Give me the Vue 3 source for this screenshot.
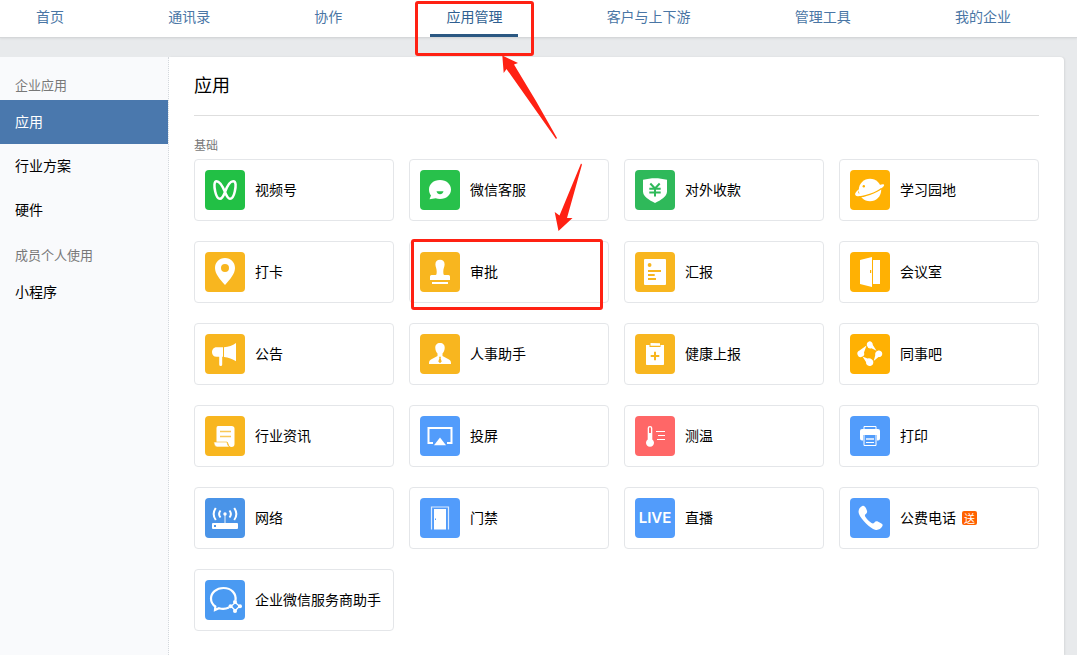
<script setup>
const navItems = [
  { label: '首页' },
  { label: '通讯录' },
  { label: '协作' },
  { label: '应用管理', active: true },
  { label: '客户与上下游' },
  { label: '管理工具' },
  { label: '我的企业' },
]

const sideGroups = [
  {
    title: '企业应用',
    items: [{ label: '应用', active: true }, { label: '行业方案' }, { label: '硬件' }],
  },
  { title: '成员个人使用', items: [{ label: '小程序' }] },
]

const apps = [
  { name: '视频号', icon: 'channels', tone: 'green' },
  { name: '微信客服', icon: 'service', tone: 'mint' },
  { name: '对外收款', icon: 'payment', tone: 'jade' },
  { name: '学习园地', icon: 'planet', tone: 'orange' },
  { name: '打卡', icon: 'pin', tone: 'yellow' },
  { name: '审批', icon: 'stamp', tone: 'yellow' },
  { name: '汇报', icon: 'report', tone: 'yellow' },
  { name: '会议室', icon: 'room', tone: 'orange' },
  { name: '公告', icon: 'megaphone', tone: 'yellow' },
  { name: '人事助手', icon: 'person', tone: 'yellow' },
  { name: '健康上报', icon: 'health', tone: 'yellow' },
  { name: '同事吧', icon: 'circle', tone: 'orange' },
  { name: '行业资讯', icon: 'scroll', tone: 'yellow' },
  { name: '投屏', icon: 'cast', tone: 'blue' },
  { name: '测温', icon: 'thermo', tone: 'red' },
  { name: '打印', icon: 'printer', tone: 'blue' },
  { name: '网络', icon: 'router', tone: 'deep' },
  { name: '门禁', icon: 'door', tone: 'blue' },
  { name: '直播', icon: 'live', tone: 'blue' },
  { name: '公费电话', icon: 'phone', tone: 'blue', badge: '送' },
  { name: '企业微信服务商助手', icon: 'assistant', tone: 'azure' },
]
</script>

<template>
  <div class="page">
    <header class="top">
      <nav class="nav">
        <a
          v-for="item in navItems"
          :key="item.label"
          href="#"
          class="nav-item"
          :class="{ active: item.active }"
        >{{ item.label }}</a>
      </nav>
    </header>

    <div class="body">
      <aside class="side">
        <section v-for="group in sideGroups" :key="group.title" class="side-group">
          <h2 class="side-title">{{ group.title }}</h2>
          <a
            v-for="item in group.items"
            :key="item.label"
            href="#"
            class="side-item"
            :class="{ active: item.active }"
          >{{ item.label }}</a>
        </section>
      </aside>

      <main class="main">
        <h1 class="title">应用</h1>
        <h2 class="subtitle">基础</h2>
        <div class="grid">
          <a v-for="app in apps" :key="app.name" href="#" class="card">
            <span class="icon" :class="app.tone">
              <span v-if="app.icon === 'live'" class="live">LIVE</span>
              <svg v-else viewBox="0 0 40 40" fill="#fff" aria-hidden="true">
                <path
                  v-if="app.icon === 'channels'"
                  d="M20 22C17.500 16 14.400 11.200 11.600 11.200C9 11.200 9 16 10.200 21.500C11.300 26.500 12.800 28.800 15 28.800C17 28.800 18.500 26 20 22C22 16.500 25.200 11.200 28.200 11.200C31.200 11.200 31 16 29.800 21.500C28.700 26.500 27.200 28.800 25 28.800C23 28.800 21.600 26 20 22Z"
                  fill="none"
                  stroke="#fff"
                  stroke-width="2.500"
                />
                <g v-else-if="app.icon === 'service'">
                  <path d="M20 10C26.500 10 31 14.200 31 19.500C31 24.800 26.500 29 20 29C18.500 29 17 28.800 15.700 28.300L9.500 29.300L11 25.500C9.700 23.800 9 21.800 9 19.500C9 14.200 13.500 10 20 10Z" />
                  <path d="M16.500 21.300H23.500C23 23.300 21.700 24.200 20 24.200S17 23.300 16.500 21.300Z" fill="#28c14b" />
                </g>
                <g v-else-if="app.icon === 'payment'">
                  <path d="M8 9.800C12 8.700 16 8.200 20 8.200S28 8.700 32 9.800V21.500C32 26.500 26 30 20 33C14 30 8 26.500 8 21.500Z" />
                  <path d="M15.300 13.500L20 18.500L24.700 13.500M14.300 18.700H25.700M14.300 22.500H25.700M20 18.500V26.500" fill="none" stroke="#2fb95a" stroke-width="2" />
                </g>
                <g v-else-if="app.icon === 'planet'">
                  <circle cx="20" cy="20" r="11.200" />
                  <path d="M10 18.500C6.500 20.800 4.600 23.200 5.200 24.700C6.300 27.500 14 26.300 22.300 23C30 20 35 16.500 34 14.800C33.600 14.100 31.900 14.200 29.600 15C31.500 16.500 27 19.500 20.800 21.700C14 24.200 8.500 24.500 8.300 22.800C8.200 21.800 9 20 10 18.500Z" />
                  <path d="M8.800 26.800C13.500 26.800 26 23 31.500 18.500" fill="none" stroke="#ffb103" stroke-width="1.300" />
                  <circle cx="13.800" cy="16.300" r="1.200" fill="#ffb103" />
                </g>
                <path
                  v-else-if="app.icon === 'pin'"
                  fill-rule="evenodd"
                  d="M20 6C26 6 30 10.500 30 16C30 21.500 25.500 27 20 33C14.500 27 10 21.500 10 16C10 10.500 14 6 20 6ZM20 12A4 4 0 1 0 20 20A4 4 0 1 0 20 12Z"
                />
                <path
                  v-else-if="app.icon === 'stamp'"
                  d="M20 7.800C23 7.800 24.700 9.800 24.600 12.500C24.500 15 23.300 16.500 23.300 19.500C23.300 22 23.500 23 24.500 23H28.500Q30 23 30 24.500V28H10V24.500Q10 23 11.500 23H15.500C16.500 23 16.700 22 16.700 19.500C16.700 16.500 15.500 15 15.400 12.500C15.300 9.800 17 7.800 20 7.800ZM12 30H28V32H12Z"
                />
                <g v-else-if="app.icon === 'report'">
                  <rect x="9" y="7" width="22" height="26" rx="1" />
                  <g fill="#f8b61f">
                    <circle cx="14.600" cy="13" r="1.900" />
                    <path d="M13 18H26V20H13ZM13 22H19.700V24H13ZM13 26H21V28H13Z" />
                  </g>
                </g>
                <g v-else-if="app.icon === 'room'">
                  <path d="M10 8L22 5V35L10 32ZM23 8H30V32H23Z" />
                  <path d="M20 18H21.200V21H20Z" fill="#ffb103" />
                </g>
                <path
                  v-else-if="app.icon === 'megaphone'"
                  d="M18 13.300V22.800H17.200V30.500Q17.200 32 15.700 32T14.200 30.500V22.800H11.500C8.800 22.800 7 20.800 7 18.200S8.800 13.300 11.500 13.300ZM19 13.200C23.500 12.800 27.500 11.500 31 9V27.200C27.500 24.700 23.500 23.400 19 22.900Z"
                />
                <g v-else-if="app.icon === 'person'">
                  <path d="M20 9C23 9 24.900 11 24.700 14C24.600 16.500 23.600 18.300 22.500 19.500V22L29 25.500C30.500 26.300 31 27.500 31 30H9C9 27.500 9.500 26.300 11 25.500L17.500 22V19.500C16.400 18.300 15.400 16.500 15.300 14C15.100 11 17 9 20 9Z" />
                  <path d="M19 22.700H21L20.600 24.300L21.700 27.500L20 29.300L18.300 27.500L19.400 24.300Z" fill="#f8b61f" />
                </g>
                <g v-else-if="app.icon === 'health'">
                  <path d="M11 11H14.500V13H25.500V11H29V30.200Q29 31 28.200 31H11.800Q11 31 11 30.200Z" />
                  <path d="M16 9L25 9.200V11.800H15.500V9.500Z" />
                  <path d="M15.700 22H24.300M20 17.700V26.300" stroke="#f8b61f" stroke-width="2" />
                </g>
                <g v-else-if="app.icon === 'circle'">
                  <path d="M19.500 7.300A3.300 3.300 0 0 1 22.800 11L26.500 16.800L21.500 14.300A3.500 3.500 0 1 1 19.500 7.300Z" />
                  <path d="M28.300 16.500A3.300 3.300 0 1 1 28.500 23L23.700 27L25.200 21.500Q24.600 17.500 28.300 16.500Z" />
                  <path d="M17.500 24.500Q19.500 23.500 22 25.500A3.700 3.700 0 1 1 16 28L12.500 22.500Z" />
                  <path d="M9.500 16.500L16.500 11.500L14 18.500A3.400 3.400 0 1 1 9.500 16.500Z" />
                </g>
                <g v-else-if="app.icon === 'scroll'">
                  <path d="M13 10H26.500Q29.500 10 29.500 12.500V28Q29.500 31 26.500 31Q24 31 23.500 28L22.500 26H11.500V12Q11.500 10 13 10Z" />
                  <path d="M15 15.500H26M15 20.500H26" stroke="#f8b61f" stroke-width="1.400" opacity=".75" />
                  <path d="M8.800 26H22Q22.300 29.500 24.500 31H12.500Q9.300 31 8.800 26Z" stroke="#f8b61f" stroke-width=".6" />
                </g>
                <g v-else-if="app.icon === 'cast'">
                  <path d="M13 27H8.500V12H31.500V27H27" fill="none" stroke="#fff" stroke-width="2" />
                  <path d="M20 21.500L26 29.300H14Z" />
                </g>
                <g v-else-if="app.icon === 'thermo'">
                  <path fill-rule="evenodd" d="M15 10Q17.300 10 17.300 12V23.500A4 4 0 1 1 12.700 23.500V12Q12.700 10 15 10ZM15 11.200Q14 11.200 14 12.500V17H16V12.500Q16 11.200 15 11.200Z" />
                  <path d="M21 15.500H30M23 19.500H30M22 23.500H30" stroke="#fff" />
                </g>
                <g v-else-if="app.icon === 'printer'">
                  <path d="M14 13V10.500H26V13" fill="none" stroke="#fff" />
                  <path d="M12 13H28Q30 13 30 15V22.500Q30 24.500 28 24.500H27V19H13V24.500H12Q10 24.500 10 22.500V15Q10 13 12 13Z" />
                  <path d="M14 19V29.500H26V19" fill="none" stroke="#fff" />
                  <path d="M16 22H24V24H16Z" opacity=".7" />
                  <path d="M16 26.500H24" stroke="#fff" />
                </g>
                <g v-else-if="app.icon === 'router'">
                  <path fill-rule="evenodd" d="M8 25H32Q33 25 33 26V30Q33 31 32 31H8Q7 31 7 30V26Q7 25 8 25ZM9 27V29H11V27Z" />
                  <circle cx="20" cy="16" r="1.700" />
                  <path d="M20 17V25" stroke="#fff" stroke-width="1.500" opacity=".6" />
                  <path d="M10.800 10Q6.500 16 10.800 22M15.500 12.500Q12.700 16 15.500 19.500M29.200 10Q33.500 16 29.200 22M24.500 12.500Q27.300 16 24.500 19.500" fill="none" stroke="#fff" stroke-width="2" />
                </g>
                <g v-else-if="app.icon === 'door'">
                  <path d="M11.500 31.500V9H28.500V31.500" fill="none" stroke="#fff" stroke-width="1.200" opacity=".8" />
                  <path fill-rule="evenodd" d="M14 11H26V31.500H14ZM15 20.500V22H16V20.500Z" />
                </g>
                <path
                  v-else-if="app.icon === 'phone'"
                  d="M12.300 8C13.700 7.400 15 8.200 16 10.300L16.800 12.200C17.500 14 17 15 15.500 16.200C14.700 17 14.700 17.800 15.500 19C17.500 21.800 19.200 23.400 21.500 25C22.700 25.700 23.500 25.500 24.200 24.800C25.500 23.300 26.500 23 28.200 23.800L31 25.200C32.700 26 33 27 32.300 28.300C30.800 31 28 32.500 25 31.700C20.500 30.500 11 21.500 9 16C7.800 12.800 9 9.500 12.300 8Z"
                />
                <g v-else-if="app.icon === 'assistant'">
                  <path d="M30.500 20.500C31.500 13.500 26.300 8 18.500 8C11.300 8 6 12.700 6 18.500C6 21.800 7.500 24.500 10.300 26.500L10 30L14 28.200C17.500 29.200 20.500 29.100 24 27.500" fill="none" stroke="#fff" stroke-width="2.200" />
                  <path d="M30.300 22.500L34.500 26.300L30.300 30.500L26 26.300Z" fill="none" stroke="#fff" stroke-width="1.300" />
                  <circle cx="30" cy="22" r="2" />
                  <circle cx="35" cy="26.300" r="2" />
                  <circle cx="30" cy="31" r="2" />
                  <circle cx="25.500" cy="26.300" r="2" />
                </g>
              </svg>
            </span>
            <span class="name">{{ app.name }}</span>
            <span v-if="app.badge" class="badge">{{ app.badge }}</span>
          </a>
        </div>
      </main>
    </div>

    <svg class="marks" width="1077" height="655" viewBox="0 0 1077 655" aria-hidden="true">
      <g fill="none" stroke="#ff2113" stroke-width="3">
        <rect x="416.500" y="2.500" width="116" height="52" rx="1.500" />
        <rect x="412.500" y="240.500" width="189" height="68" rx="1.500" />
      </g>
      <g fill="#ff2113">
        <path d="M502.300 55.500L518 63L514 64.500Q536 100 557 138L556 139L506.500 69L503.700 73Z" />
        <path d="M581 163.500L582 164.500L567 218L572.500 218L558.500 231L554.700 212L559.500 215.500Z" />
      </g>
    </svg>
  </div>
</template>

<style>
body {
  margin: 0;
  background: #e8eaec;
}
</style>

<style scoped>
.page {
  position: relative;
  display: flex;
  flex-direction: column;
  min-height: 100vh;
  overflow: hidden;
  font-family: "Noto Sans CJK SC", sans-serif;
  font-size: 14px;
  line-height: 20px;
  color: #000;
}
a {
  color: inherit;
  text-decoration: none;
}
h1,
h2 {
  margin: 0;
  font-weight: 400;
}
.top {
  background: #fff;
  border-bottom: 1px solid #d5d7d9;
  box-shadow: 0 1px 2px rgba(0, 0, 0, 0.06);
}
.nav {
  display: flex;
  justify-content: space-between;
  padding: 0 50px 0 20px;
}
.nav-item {
  box-sizing: border-box;
  height: 37px;
  padding: 6px 16px 0;
  border-bottom: 3px solid transparent;
  color: #4a76a5;
  white-space: nowrap;
}
.nav-item.active {
  color: #2f5f91;
  border-color: #2b5882;
}
.body {
  flex: 1;
  display: flex;
  margin: 19px 13px 0 0;
}
.side {
  flex: none;
  width: 168px;
  padding-top: 5px;
  background: #f9fafc;
  border-right: 1px dotted #d5d9de;
}
.side-group {
  padding-top: 10px;
}
.side-title {
  padding: 0 15px 2px;
  font-size: 13px;
  line-height: 26px;
  color: #787878;
}
.side-item {
  display: block;
  padding: 0 15px 2px;
  line-height: 42px;
}
.side-item.active {
  background: #4a78ad;
  color: #fff;
}
.main {
  flex: 1;
  min-width: 0;
  padding: 0 25px 24px;
  background: #fff;
  border-radius: 0 4px 0 0;
  box-shadow: 1px 0 2px rgba(0, 0, 0, 0.08);
}
.title {
  padding: 14px 0 18px;
  border-bottom: 1px solid #dedede;
  font-size: 18px;
  line-height: 26px;
}
.subtitle {
  margin-bottom: 4px;
  padding-top: 19px;
  font-size: 12px;
  line-height: 20px;
  color: #787878;
}
.grid {
  display: grid;
  grid-template-columns: repeat(4, 1fr);
  gap: 20px 15px;
}
.card {
  display: flex;
  align-items: center;
  padding: 10px;
  border: 1px solid #e4e6e9;
  border-radius: 4px;
  white-space: nowrap;
}
.icon {
  flex: none;
  display: flex;
  align-items: center;
  justify-content: center;
  width: 40px;
  height: 40px;
  margin-right: 10px;
  border-radius: 4px;
}
.icon svg {
  width: 40px;
  height: 40px;
}
.name {
  padding-bottom: 2px;
}
.green { background: #22c045; }
.mint { background: #28c14b; }
.jade { background: #2fb95a; }
.yellow { background: #f8b61f; }
.orange { background: #ffb103; }
.blue { background: #529cfb; }
.deep { background: #4a94e8; }
.azure { background: #4a9af2; }
.red { background: #ff6767; }
.live {
  font-family: Inter, sans-serif;
  font-size: 15px;
  font-weight: 600;
  color: #fff;
}
.badge {
  margin-left: 6px;
  width: 15px;
  border-radius: 2px;
  background: #ff6200;
  color: #fff;
  font-size: 11px;
  line-height: 14px;
  text-align: center;
}
.marks {
  position: absolute;
  top: 0;
  left: 0;
  pointer-events: none;
}
</style>
